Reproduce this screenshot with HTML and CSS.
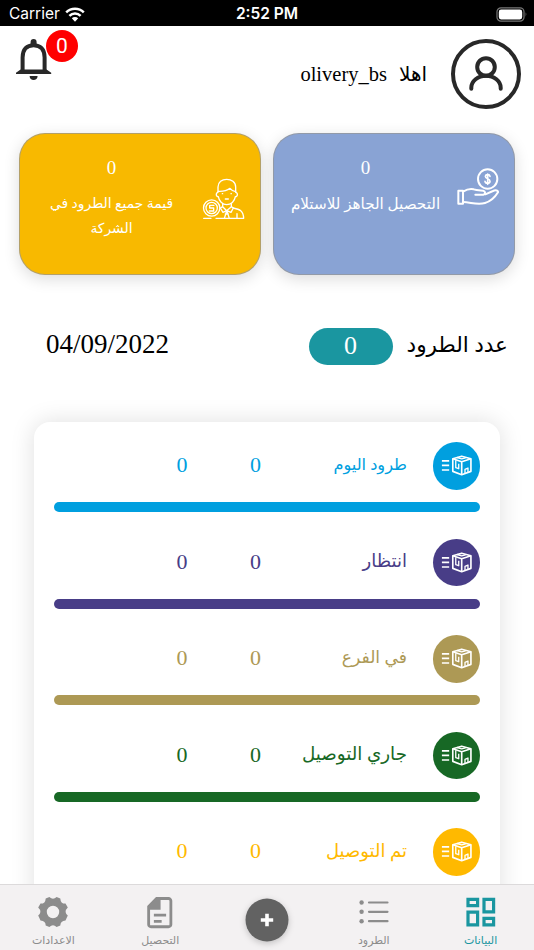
FILE: index.html
```
<!DOCTYPE html>
<html lang="ar" dir="rtl">
<head>
    <meta charset="UTF-8">
    <meta name="viewport" content="width=device-width, initial-scale=1.0">
    <title>Olivery</title>
    <link rel="stylesheet" href="styles.css">
</head>
<body>
    <!-- Shared icons -->
    <svg class="defs" width="0" height="0">
        <symbol id="box" viewBox="0 0 144 144">
            <g fill="none" stroke="#fff" stroke-width="5" stroke-linejoin="round">
                <path d="M27 57h22M27 71h22M27 85h22"/>
                <path d="M60 51l27-8 28 8v38l-28 10-27-10z"/>
                <path d="M60 51l27 9 28-9M87 60v38"/>
                <path d="M73 47l14 4 12-3M69 55v23l9 3V66M97 96V83l9-4v14" stroke-width="4"/>
            </g>
        </symbol>
    </svg>

    <!-- Phone status bar -->
    <div class="status-bar" dir="ltr">
        <div class="carrier">
            <span>Carrier</span>
            <svg width="20" height="15" viewBox="0 0 20 15">
                <g fill="none" stroke="#fff" stroke-width="2.5">
                    <path d="M1.2 5.3a12.7 12.7 0 0 1 17.6 0"/>
                    <path d="M4.4 8.8a8 8 0 0 1 11.2 0"/>
                </g>
                <path d="M6.8 11.3a4.6 4.6 0 0 1 6.4 0L10 14.7z" fill="#fff"/>
            </svg>
        </div>
        <div class="clock">2:52 PM</div>
        <div class="battery-box">
            <svg width="32" height="15" viewBox="0 0 32 15">
                <rect x="1" y=".8" width="27" height="13.4" rx="4" fill="none" stroke="#777" stroke-width="1.2"/>
                <rect x="2.8" y="2.6" width="23.4" height="9.8" rx="2.3" fill="#fff"/>
                <path d="M29.7 5.3q1.6 2.2 0 4.4z" fill="#888"/>
            </svg>
        </div>
    </div>

    <main>
        <header>
            <div class="user">
                <svg class="avatar" width="70" height="70" viewBox="0 0 70 70">
                    <g fill="none" stroke="#282828" stroke-width="4">
                        <circle cx="35" cy="35" r="33"/>
                        <circle cx="35" cy="28" r="8.8"/>
                        <path d="M20.3 49.7v-1a14.7 12 0 0 1 29.4 0v1" stroke-linecap="round"/>
                    </g>
                </svg>
                <div class="greeting"><span class="hello">اهلا</span><bdi>olivery_bs</bdi></div>
            </div>
            <div class="bell">
                <svg width="36" height="42" viewBox="0 0 36 42">
                    <path d="M6.6 31V18.5C6.6 10 11 6.2 17.6 6.2S28.6 10 28.6 18.5V31" fill="none" stroke="#282828" stroke-width="4"/>
                    <path d="M14.6 5V3a3 3 0 0 1 6 0v2zM4.6 30.5h26l4.6 3.2V35H0v-1.3zM13.6 37h8c0 2.6-1.8 4-4 4s-4-1.4-4-4z" fill="#282828"/>
                </svg>
                <span class="badge">0</span>
            </div>
        </header>

        <section class="cards">
            <div class="card blue">
                <div class="card-icon">
                    <svg width="42" height="38" viewBox="0 0 126 114">
                        <g fill="none" stroke="#fff" stroke-width="6" stroke-linejoin="round" stroke-linecap="round">
                            <circle cx="92" cy="33" r="29"/>
                            <path d="M99 25c-1-7-13-7-14 0 0 9 14 6 14 15-1 8-14 7-15 0M92 18v31" stroke-width="5"/>
                            <path d="M4 68h14v39H4zM18 71c10-6 20-10 32-7 9 3 20 3 29 4 7 2 7 11 0 12H55"/>
                            <path d="M85 79l23-10c8-4 17-1 15 4-9 15-25 28-39 32-24 7-44-3-66-3"/>
                        </g>
                    </svg>
                </div>
                <div class="card-text">
                    <div class="amount">0</div>
                    <p class="label-ready">التحصيل الجاهز للاستلام</p>
                </div>
            </div>
            <div class="card yellow">
                <div class="card-icon low">
                    <svg width="42" height="41" viewBox="0 0 126 123">
                        <g fill="none" stroke="#fff" stroke-width="4" stroke-linejoin="round" stroke-linecap="round">
                            <circle cx="26" cy="90" r="24.5"/>
                            <circle cx="26" cy="90" r="17"/>
                            <path d="M33 82H20v8h12v9H19"/>
                            <path d="M45 43V27C45 12 57 4 71 4s27 8 27 23v16c7 0 7 13-1 13-2 14-13 24-26 24S48 69 46 56c-8 0-8-13-1-13z"/>
                            <path d="M45 40c15 1 28-3 36-9 4 5 9 9 17 10M58 47h1M84 47h1M67 63h9M59 77v9L71 98l14-12v-9M59 86l-7 4 8 13 11-5 13 5 7-13-6-4"/>
                            <path d="M91 90c19 4 30 8 31 31H39M14 121H2M9 121h15M71 99l-7 22M72 99l7 22M67 108h9M102 107v13"/>
                        </g>
                    </svg>
                </div>
                <div class="card-text">
                    <div class="amount">0</div>
                    <p class="label-value">قيمة جميع الطرود في<br>الشركة</p>
                </div>
            </div>
        </section>

        <section class="summary">
            <div class="total">
                <span class="total-label">عدد الطرود</span>
                <span class="pill">0</span>
            </div>
            <span class="date">04/09/2022</span>
        </section>

        <section class="panel">
            <div class="status today">
                <div class="line">
                    <svg class="dot"><use href="#box"/></svg>
                    <span class="name">طرود اليوم</span><span class="num">0</span><span class="num">0</span>
                </div>
                <div class="bar"></div>
            </div>
            <div class="status waiting">
                <div class="line">
                    <svg class="dot"><use href="#box"/></svg>
                    <span class="name">انتظار</span><span class="num">0</span><span class="num">0</span>
                </div>
                <div class="bar"></div>
            </div>
            <div class="status branch">
                <div class="line">
                    <svg class="dot"><use href="#box"/></svg>
                    <span class="name">في الفرع</span><span class="num">0</span><span class="num">0</span>
                </div>
                <div class="bar"></div>
            </div>
            <div class="status delivering">
                <div class="line">
                    <svg class="dot"><use href="#box"/></svg>
                    <span class="name">جاري التوصيل</span><span class="num">0</span><span class="num">0</span>
                </div>
                <div class="bar"></div>
            </div>
            <div class="status delivered">
                <div class="line">
                    <svg class="dot"><use href="#box"/></svg>
                    <span class="name">تم التوصيل</span><span class="num">0</span><span class="num">0</span>
                </div>
                <div class="bar"></div>
            </div>
        </section>
    </main>

    <!-- Bottom menu -->
    <nav class="tabs">
        <a class="tab active">
            <svg width="32" height="32" viewBox="0 0 32 32">
                <g fill="none" stroke="#1a96a0" stroke-width="3.2">
                    <path d="M3 3.3h9.6v6.4H3zM19 3.3h9.6v12.6H19zM3 16.2h9.6v12.6H3zM19 22.4h9.6v6.4H19z"/>
                </g>
            </svg>
            <span>البيانات</span>
        </a>
        <a class="tab">
            <svg width="32" height="32" viewBox="0 0 32 32">
                <g fill="#8c8c8c"><circle cx="3.6" cy="6.5" r="2.2"/><circle cx="3.6" cy="15.8" r="2.2"/><circle cx="3.6" cy="25.2" r="2.2"/></g>
                <path d="M11 6.5h18.5M11 15.8h18.5M11 25.2h18.5" stroke="#8c8c8c" stroke-width="2.2" stroke-linecap="round"/>
            </svg>
            <span>الطرود</span>
        </a>
        <div class="tab add">
            <svg width="44" height="44" viewBox="0 0 44 44">
                <circle cx="22" cy="22" r="21.5" fill="#626262"/>
                <path d="M22 15.8v12.4M15.8 22h12.4" stroke="#fff" stroke-width="3.6"/>
            </svg>
        </div>
        <a class="tab">
            <svg width="32" height="33" viewBox="0 0 32 34">
                <path d="M12.5 2.6h12.3a2.4 2.4 0 0 1 2.4 2.4v24.3a2.4 2.4 0 0 1-2.4 2.4H6.7a2.4 2.4 0 0 1-2.4-2.4V11z" fill="none" stroke="#8c8c8c" stroke-width="2.9"/>
                <path d="M4 10.5l8-8h4.6v11.7H4zM9.7 18.3h12.6v2.9H9.7zM9.7 24.6h8v2.9h-8z" fill="#8c8c8c"/>
            </svg>
            <span>التحصيل</span>
        </a>
        <a class="tab">
            <svg width="32" height="32" viewBox="-16 -16 32 32">
                <path d="M-7.3-13.6l3.7-1.4q3.6 3.4 7.2 0l3.7 1.4q.3 5.4 5.2 5.2l2.3 3.8q-4.3 4.1 0 8.2l-2.3 4.8q-5.1.2-5.2 5.2L3.6 15q-3.6-3.4-7.2 0l-3.7-1.4q.1-5-5.2-5.2l-2.3-4.8q4.3-4.1 0-8.2l2.3-3.8q4.9.2 5.2-5.2zM0-6.2A6.2 6.2 0 1 0 0 6.2 6.2 6.2 0 1 0 0-6.2z" fill="#8c8c8c" fill-rule="evenodd"/>
            </svg>
            <span>الاعدادات</span>
        </a>
    </nav>
</body>
</html>
```

FILE: styles.css
```
* {
    box-sizing: border-box;
}

body {
    margin: 0;
    height: 950px;
    display: flex;
    flex-direction: column;
    overflow: hidden;
    background: #fff;
    color: #000;
    font-family: "Liberation Serif", "DejaVu Sans", serif;
}

svg {
    display: block;
    flex: none;
    overflow: visible;
}

.defs {
    position: absolute;
}

/* Status bar */
.status-bar {
    height: 26px;
    flex: none;
    display: grid;
    grid-template-columns: 1fr auto 1fr;
    align-items: center;
    padding: 2px 6px 0 9px;
    background: #000;
    color: #fff;
    font: 15.5px/24px Inter, sans-serif;
}

.carrier {
    display: flex;
    align-items: center;
    gap: 5px;
}

.clock {
    margin-right: 3px;
    font-weight: 600;
}

.battery-box {
    display: flex;
    justify-content: flex-end;
}

main {
    flex: 1;
    min-height: 0;
    overflow: hidden;
}

/* Header */
header {
    height: 107px;
    padding: 13px 13px 0 16px;
    display: flex;
    justify-content: space-between;
}

.user {
    display: flex;
    height: 70px;
    align-items: center;
    gap: 24px;
}

.greeting {
    display: flex;
    align-items: center;
    gap: 12px;
    font-size: 20.5px;
    line-height: 30px;
}

.hello {
    font-size: 20px;
}

.bell {
    position: relative;
    width: 36px;
    height: 42px;
}

.badge {
    position: absolute;
    left: 30px;
    top: -9px;
    width: 32px;
    height: 32px;
    border-radius: 50%;
    background: #f00;
    color: #fff;
    font: 21px/33px Roboto, sans-serif;
    text-align: center;
}

/* Top cards */
.cards {
    display: flex;
    gap: 12px;
    padding: 0 19px;
}

.card {
    flex: 1;
    height: 142px;
    display: flex;
    padding: 24px 15px 0;
    border: 1px solid rgba(150, 150, 150, .7);
    border-radius: 26px;
    box-shadow: 0 4px 16px rgba(0, 0, 0, .14);
    color: #fff;
}

.blue {
    background: #89a3d4;
}

.yellow {
    background: #f8b900;
}

.card-icon {
    width: 42px;
    flex: none;
    padding-top: 10px;
}

.low {
    padding-top: 20px;
}

.card-text {
    flex: 1;
    padding-left: 1px;
    padding-right: 16px;
    text-align: center;
}

.yellow .card-text {
    padding-right: 15px;
    padding-left: 0;
}

.amount {
    height: 20px;
    font-size: 19px;
    line-height: 20px;
}

.card p {
    margin: 13px 0 0;
    line-height: 25px;
    white-space: nowrap;
}

.label-ready {
    font-size: 15.2px;
}

.label-value {
    font-size: 13.9px;
}

/* Counter and date */
.summary {
    display: flex;
    align-items: center;
    justify-content: space-between;
    height: 37px;
    margin: 53px 26px 57px 46px;
}

.total {
    display: flex;
    align-items: center;
    gap: 14px;
}

.total-label {
    margin-top: -4px;
    font-size: 21.6px;
}

.pill {
    width: 84px;
    height: 37px;
    border-radius: 19px;
    background: #1a96a0;
    color: #fff;
    font-size: 26px;
    line-height: 36px;
    text-align: center;
}

.date {
    font-size: 27px;
    line-height: 32px;
    margin-bottom: 6px;
}

/* Parcel list */
.panel {
    margin: 0 34px;
    height: 560px;
    padding: 20px 20px 0;
    border-radius: 16px;
    box-shadow: 0 0 24px rgba(0, 0, 0, .13);
}

.status {
    height: 96.5px;
}

.line {
    display: grid;
    grid-template-columns: 47px 141px 73px 74px;
    align-items: center;
    height: 47px;
}

.dot {
    width: 47.5px;
    height: 47.5px;
    border-radius: 50%;
    background: currentColor;
}

.name {
    margin-top: -2px;
    padding-right: 26px;
    font-size: 18px;
    line-height: 30px;
    white-space: nowrap;
}

.num {
    margin-top: -1px;
    font-size: 22px;
    text-align: center;
}

.bar {
    height: 10px;
    margin-top: 13px;
    border-radius: 5px;
    background: currentColor;
}

.today {
    color: #009fdf;
}

.today .name {
    font-size: 16.2px;
}

.waiting {
    color: #483d87;
}

.branch {
    color: #ad9955;
}

.branch .name {
    font-size: 17.2px;
}

.delivering {
    color: #176825;
}

.delivering .name {
    font-size: 18.3px;
}

.delivered {
    color: #ffb900;
}

/* Bottom menu */
.tabs {
    height: 66px;
    flex: none;
    display: grid;
    grid-template-columns: repeat(5, 1fr);
    background: #f3f1f2;
    border-top: 1px solid #dcdadb;
    position: relative;
}

.tab {
    display: flex;
    flex-direction: column;
    align-items: center;
    justify-content: space-between;
    padding: 11px 0 0;
    color: #8c8c8c;
    font-size: 11px;
    line-height: 20px;
}

.active {
    color: #1a96a0;
}

.add {
    padding-top: 13px;
    filter: drop-shadow(0 2px 3px rgba(0, 0, 0, .2));
}
```
